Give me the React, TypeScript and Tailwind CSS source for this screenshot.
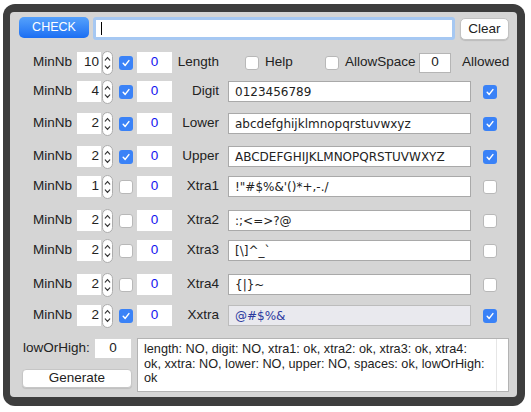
import React from "react";

type Row = {
  label: string;
  min: number;
  use: boolean;
  chars: string;
  allowed: boolean;
  gap: string;
  disabled?: boolean;
};

const rows: Row[] = [
  { label: "Digit", min: 4, use: true, chars: "0123456789", allowed: true, gap: "mt-0" },
  { label: "Lower", min: 2, use: true, chars: "abcdefghijklmnopqrstuvwxyz", allowed: true, gap: "mt-[3px]" },
  { label: "Upper", min: 2, use: true, chars: "ABCDEFGHIJKLMNOPQRSTUVWXYZ", allowed: true, gap: "mt-[4px]" },
  { label: "Xtra1", min: 1, use: false, chars: "!\"#$%&'()*+,-./", allowed: false, gap: "mt-[1px]" },
  { label: "Xtra2", min: 2, use: false, chars: ":;<=>?@", allowed: false, gap: "mt-[5px]" },
  { label: "Xtra3", min: 2, use: false, chars: "[\\]^_`", allowed: false, gap: "mt-[1px]" },
  { label: "Xtra4", min: 2, use: false, chars: "{|}~", allowed: false, gap: "mt-[5px]" },
  { label: "Xxtra", min: 2, use: true, chars: "@#$%&", allowed: true, gap: "mt-[2px]", disabled: true },
];

function Check({ on }: { on: boolean }) {
  if (!on) {
    return <span className="block h-[14px] w-[14px] shrink-0 rounded-[3px] border border-[#b8b8b8] bg-white" />;
  }
  return (
    <span className="flex h-[14px] w-[14px] shrink-0 items-center justify-center rounded-[3px] bg-[#3a82f7]">
      <svg width="10" height="10" viewBox="0 0 10 10">
        <path d="M2.2 5.3 L4.2 7.4 L7.9 2.6" stroke="white" strokeWidth="1.5" fill="none" strokeLinecap="round" strokeLinejoin="round" />
      </svg>
    </span>
  );
}

function Stepper() {
  return (
    <svg width="11" height="24" viewBox="0 0 11 24" className="shrink-0">
      <rect x="0.5" y="0.5" width="10" height="23" rx="5" fill="white" stroke="#acacac" />
      <path d="M3.2 9.2 L5.5 6.6 L7.8 9.2" stroke="#333" strokeWidth="1.1" fill="none" strokeLinecap="round" />
      <path d="M3.2 14.8 L5.5 17.4 L7.8 14.8" stroke="#333" strokeWidth="1.1" fill="none" strokeLinecap="round" />
    </svg>
  );
}

function MinPart({ min, use }: { min: number; use: boolean }) {
  return (
    <>
      <span className="w-[62px] shrink-0 text-right">MinNb</span>
      <span className="ml-[5px] flex h-[21px] w-[24px] shrink-0 items-center justify-end bg-white pr-[2px]">{min}</span>
      <span className="ml-[1px]">
        <Stepper />
      </span>
      <span className="ml-[6px]">
        <Check on={use} />
      </span>
      <span className="ml-[4px] flex h-[21px] w-[35px] shrink-0 items-center justify-center bg-white text-[#1414f0]">0</span>
    </>
  );
}

export default function App() {
  return (
    <div className="h-[412px] w-[531px] bg-white pl-[3px] pt-[4px] font-['Liberation_Sans',Arial,sans-serif] text-[13.5px] text-[#222]">
      <div className="h-[402px] w-[522px] rounded-[12px] bg-[#3d3d3d] pb-[9px] pl-[7px] pr-[8px] pt-[8px]">
        <div className="flex h-full flex-col rounded-[4px] bg-[#d5d5d5]">
          {/* top bar */}
          <div className="flex items-start pl-[9px] pt-[5px]">
            <button className="flex h-[21px] w-[70px] items-center justify-center rounded-[5px] bg-gradient-to-b from-[#55a1fb] to-[#1b6ef3] text-[12.5px] text-white">
              CHECK
            </button>
            <div className="ml-[4px] flex h-[23px] w-[362px] items-center rounded-[3px] border-[3px] border-[#a6c8f2] bg-white pl-[5px]">
              <span className="block h-[13px] w-[1px] bg-black" />
            </div>
            <button className="ml-[5px] mt-[1px] flex h-[22px] w-[49px] items-center justify-center rounded-[5px] border border-[#c2c2c2] bg-white shadow-[0_1px_1px_rgba(0,0,0,0.12)]">
              Clear
            </button>
          </div>

          {/* length row */}
          <div className="mt-[8px] flex h-[29px] items-center">
            <MinPart min={10} use={true} />
            <span className="w-[47px] shrink-0 text-right">Length</span>
            <span className="ml-[26px]">
              <Check on={false} />
            </span>
            <span className="ml-[6px] w-[54px] shrink-0">Help</span>
            <span className="ml-[6px]">
              <Check on={false} />
            </span>
            <span className="ml-[6px] w-[69px] shrink-0">AllowSpace</span>
            <span className="ml-[5px] flex h-[20px] w-[32px] shrink-0 items-center justify-center border border-[#b5b5b5] bg-white">0</span>
            <span className="ml-[11px]">Allowed</span>
          </div>

          {rows.map((r) => (
            <div key={r.label} className={`${r.gap} flex h-[29px] items-center`}>
              <MinPart min={r.min} use={r.use} />
              <span className="w-[47px] shrink-0 text-right">{r.label}</span>
              <span
                className={
                  r.disabled
                    ? "ml-[9px] flex h-[21px] w-[243px] shrink-0 items-center border border-[#bcbcbc] bg-[#e9e9ee] pl-[6px] font-['DejaVu_Sans',sans-serif] text-[12px] text-[#2b3a9e]"
                    : "ml-[9px] flex h-[21px] w-[243px] shrink-0 items-center border border-[#a9a9a9] bg-white pl-[6px] font-['DejaVu_Sans',sans-serif] text-[12px] text-[#222]"
                }
              >
                {r.chars}
              </span>
              <span className="ml-[12px]">
                <Check on={r.allowed} />
              </span>
            </div>
          ))}

          {/* bottom */}
          <div className="mt-[8px] flex">
            <div className="ml-[12px] flex w-[110px] flex-col">
              <div className="mt-[1px] flex h-[19px] items-center">
                <span className="ml-[1px]">lowOrHigh:</span>
                <span className="ml-auto mr-[1px] flex h-[19px] w-[36px] items-center justify-center bg-white">0</span>
              </div>
              <button className="mt-[11px] flex h-[19px] w-[110px] items-center justify-center rounded-[4px] border border-[#c6c6c6] bg-white shadow-[0_1px_1px_rgba(0,0,0,0.1)]">
                Generate
              </button>
            </div>
            <div className="ml-[5px] flex h-[54px] w-[372px] border border-[#b3b3b3] bg-white">
              <div className="flex-1 overflow-hidden whitespace-nowrap pl-[6px] pt-[3px] text-[12.7px] leading-[14.5px]">
                <div>length: NO, digit: NO, xtra1: ok, xtra2: ok, xtra3: ok, xtra4:</div>
                <div>ok, xxtra: NO, lower: NO, upper: NO, spaces: ok, lowOrHigh:</div>
                <div>ok</div>
              </div>
              <div className="w-[12px] border-l border-[#e6e6e6]" />
            </div>
          </div>
        </div>
      </div>
    </div>
  );
}
